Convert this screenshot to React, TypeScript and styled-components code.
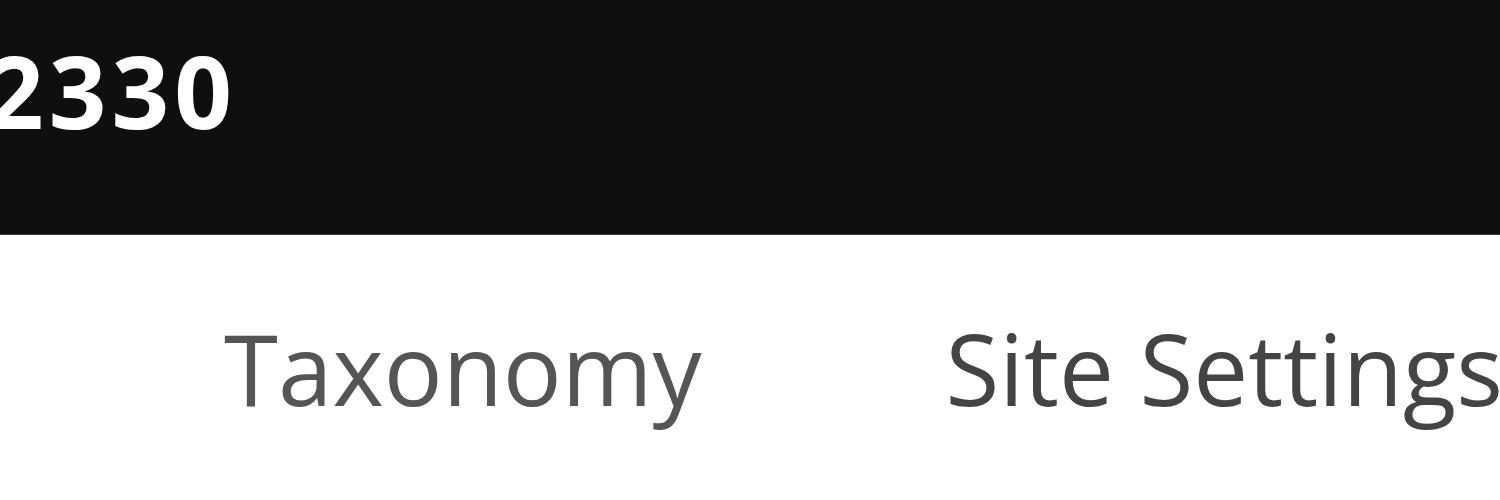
import React from "react";
import styled, { createGlobalStyle } from "styled-components";

const Global = createGlobalStyle`
  html, body { margin: 0; padding: 0; background: #ffffff; overflow: hidden; }
  body { font-family: "Open Sans", "DejaVu Sans", sans-serif; }
`;

const Page = styled.div`
  width: 1500px;
  height: 500px;
  overflow: hidden;
  background: #ffffff;
  display: flex;
  flex-direction: column;
`;

const TopBar = styled.header`
  height: 235px;
  flex: 0 0 235px;
  background: #0f0f0f;
  border-bottom: 1px solid #3a3a3a;
  box-sizing: border-box;
  padding-top: 40px;
  display: flex;
  align-items: flex-start;
  overflow: hidden;
`;

const Counter = styled.span`
  font-family: "Open Sans", "DejaVu Sans", sans-serif;
  font-weight: 700;
  font-size: 101px;
  line-height: 1;
  color: #ffffff;
  letter-spacing: 5px;
  margin-left: -14px;
  white-space: nowrap;
`;

const Nav = styled.nav`
  display: flex;
  align-items: flex-start;
  gap: 244px;
  padding-top: 84px;
  padding-left: 224px;
  white-space: nowrap;
`;

const NavItem = styled.a<{ $active?: boolean }>`
  font-family: "Open Sans", "DejaVu Sans", sans-serif;
  font-size: 98px;
  line-height: 1;
  color: ${(p) => (p.$active ? "#444444" : "#555555")};
  text-decoration: none;
  letter-spacing: 0px;
`;

export default function App() {
  return (
    <>
      <Global />
      <Page>
        <TopBar>
          <Counter>2330</Counter>
        </TopBar>
        <Nav>
          <NavItem href="#">Taxonomy</NavItem>
          <NavItem href="#" $active>Site Settings</NavItem>
        </Nav>
      </Page>
    </>
  );
}
